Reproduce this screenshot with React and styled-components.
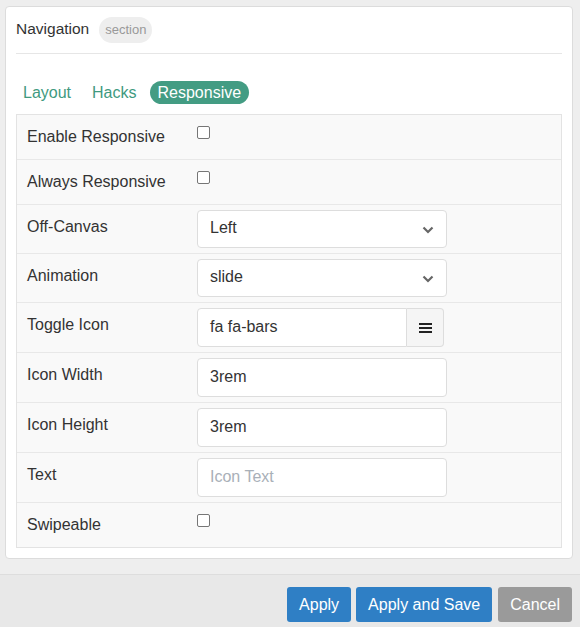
import React from 'react';
import styled, { createGlobalStyle } from 'styled-components';

const GlobalStyle = createGlobalStyle`
html, body {
  margin: 0;
  padding: 0;
  background: #eeeeee;
  font-family: "Liberation Sans", Arial, sans-serif;
  color: #333;
}
* { box-sizing: border-box; }
`;

const Page = styled.div`
width: 580px;
height: 627px;
display: flex;
flex-direction: column;
overflow: hidden;
`;

const Card = styled.div`
margin: 6px 7px 0 5px;
background: #fff;
border: 1px solid #dcdcdc;
border-radius: 4px;
padding: 10px 10px 10px 10px;
`;

const Header = styled.div`
display: flex;
align-items: center;
gap: 10px;
height: 26px;
padding-bottom: 10px;
box-sizing: content-box;
border-bottom: 1px solid #e6e6e6;
`;

const Title = styled.span`
font-size: 15.5px;
color: #333;
margin-bottom: 3px;
`;

const Badge = styled.span`
background: #eeeeee;
color: #999;
font-size: 13px;
height: 26px;
line-height: 26px;
padding: 0 6px;
border-radius: 13px;
`;

const Tabs = styled.div`
display: flex;
gap: 5px;
margin-top: 27px;
margin-bottom: 10px;
margin-left: -1px;
`;

const Tab = styled.span`
font-size: 16px;
height: 23px;
line-height: 23px;
padding: 0 8px;
border-radius: 12px;
color: ${p => (p.$active ? '#fff' : '#3f9a80')};
background: ${p => (p.$active ? '#439c83' : 'transparent')};
`;

const Table = styled.div`
background: #f9f9f9;
border: 1px solid #e3e3e3;
`;

const Row = styled.div`
display: flex;
border-top: ${p => (p.$first ? 'none' : '1px solid #e8e8e8')};
`;

const Label = styled.div`
width: 180px;
padding: ${p => (p.$check ? '11px 10px 11px 10px' : '11px 10px 0 10px')};
font-size: 16px;
line-height: 22px;
color: #333;
`;

const Control = styled.div`
padding: ${p => (p.$check ? '11px 0 0 0' : '5px 0 5px 0')};
`;

const Check = styled.input`
appearance: none;
display: block;
width: 13px;
height: 13px;
margin: 0;
border: 1px solid #767676;
border-radius: 2px;
background: #fff;
`;

const Field = styled.div`
position: relative;
width: ${p => p.$w || 250}px;
height: ${p => (p.$select ? 38 : 39)}px;
border: 1px solid #dddddd;
border-radius: ${p => (p.$joined ? '4px 0 0 4px' : '4px')};
background: #fff;
padding: 0 12px;
font-size: 16px;
line-height: ${p => (p.$select ? 33 : 36)}px;
color: ${p => (p.$placeholder ? '#a9b0b8' : '#333')};
`;

const Arrow = styled.svg`
position: absolute;
right: 12px;
top: 15px;
`;

const Group = styled.div`
display: flex;
`;

const Addon = styled.div`
width: 37px;
height: 39px;
border: 1px solid #dddddd;
border-left: none;
border-radius: 0 4px 4px 0;
background: #f5f5f5;
display: flex;
align-items: center;
justify-content: center;
`;

const Footer = styled.div`
margin-top: 15px;
flex: 1;
background: #e8e8e8;
border-top: 1px solid #dddddd;
display: flex;
justify-content: flex-end;
align-items: flex-start;
gap: 5px;
padding: 12px 8px 0 0;
`;

const Button = styled.button`
font-family: "Liberation Sans", Arial, sans-serif;
font-size: 16px;
height: 35px;
padding: 0 12px;
border: none;
border-radius: 3px;
color: #fff;
background: ${p => (p.$gray ? '#9a9a9a' : '#2f7fc5')};
margin-left: ${p => (p.$gap ? '1px' : '0')};
`;

const Chevron = () => (
  <Arrow width="12" height="8" viewBox="0 0 12 8">
    <path d="M1.5 1.5 L6 6 L10.5 1.5" fill="none" stroke="#666" strokeWidth="2.2" />
  </Arrow>
);

const Bars = () => (
  <svg width="13" height="12" viewBox="0 0 13 12">
    <rect x="0" y="1" width="13" height="2" fill="#222" />
    <rect x="0" y="5" width="13" height="2" fill="#222" />
    <rect x="0" y="9" width="13" height="2" fill="#222" />
  </svg>
);

const rows = [
  { label: 'Enable Responsive', type: 'check' },
  { label: 'Always Responsive', type: 'check' },
  { label: 'Off-Canvas', type: 'select', value: 'Left' },
  { label: 'Animation', type: 'select', value: 'slide' },
  { label: 'Toggle Icon', type: 'icon', value: 'fa fa-bars' },
  { label: 'Icon Width', type: 'text', value: '3rem' },
  { label: 'Icon Height', type: 'text', value: '3rem' },
  { label: 'Text', type: 'text', placeholder: 'Icon Text' },
  { label: 'Swipeable', type: 'check' },
];

function renderControl(row) {
  if (row.type === 'check') return <Check type="checkbox" />;
  if (row.type === 'select')
    return (
      <Field $select>
        {row.value}
        <Chevron />
      </Field>
    );
  if (row.type === 'icon')
    return (
      <Group>
        <Field $w={210} $joined>{row.value}</Field>
        <Addon><Bars /></Addon>
      </Group>
    );
  if (row.placeholder) return <Field $placeholder>{row.placeholder}</Field>;
  return <Field>{row.value}</Field>;
}

export default function App() {
  return (
    <Page>
      <GlobalStyle />
      <Card>
        <Header>
          <Title>Navigation</Title>
          <Badge>section</Badge>
        </Header>
        <Tabs>
          <Tab>Layout</Tab>
          <Tab>Hacks</Tab>
          <Tab $active>Responsive</Tab>
        </Tabs>
        <Table>
          {rows.map((row, i) => {
            const check = row.type === 'check';
            return (
              <Row key={row.label} $first={i === 0}>
                <Label $check={check}>{row.label}</Label>
                <Control $check={check}>{renderControl(row)}</Control>
              </Row>
            );
          })}
        </Table>
      </Card>
      <Footer>
        <Button>Apply</Button>
        <Button>Apply and Save</Button>
        <Button $gray $gap>Cancel</Button>
      </Footer>
    </Page>
  );
}
